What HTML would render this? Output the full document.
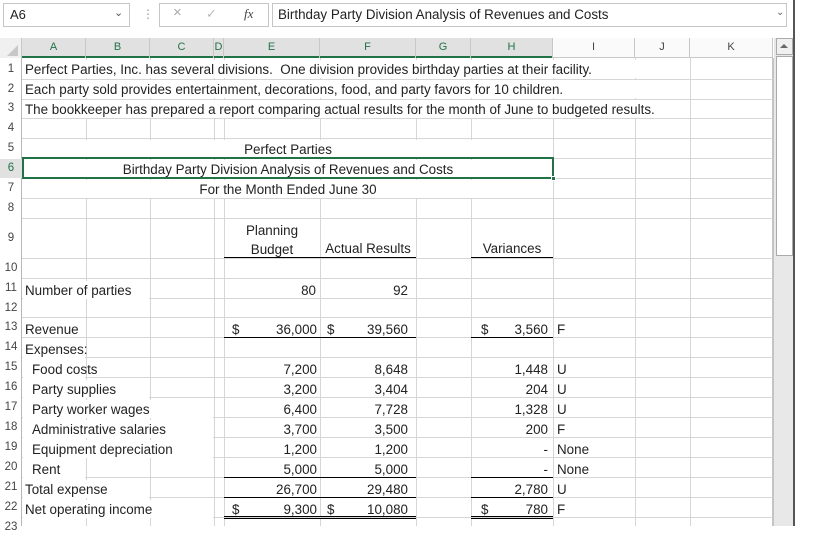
<!DOCTYPE html>
<html><head><meta charset="utf-8"><style>
*{margin:0;padding:0;box-sizing:border-box}
body{width:836px;height:526px;background:#fff;position:relative;overflow:hidden;font-family:"Liberation Sans",sans-serif;font-size:13.4px;color:#222}
.a{position:absolute;line-height:20px}
.vl{position:absolute;width:1px;background:#d6d6d6}
.hl{position:absolute;height:1px;background:#d6d6d6}
.t{position:absolute;white-space:nowrap;line-height:20px;height:18px;background:#fff;overflow:visible}
.r{text-align:right}
.c{text-align:center}
.rn{position:absolute;left:0;width:22px;text-align:center;font-size:11.5px;color:#444;line-height:18px}
.ch{position:absolute;top:38px;height:20px;line-height:19px;text-align:center;font-size:11px;border-right:1px solid #c8c8c8}
.ul{position:absolute;height:1px;background:#000}
</style></head><body>
<!-- formula bar -->
<div class="a" style="left:3px;top:3px;width:127px;height:24px;border:1px solid #c6c6c6"></div>
<div class="a" style="left:10px;top:5px;font-size:13px">A6</div>
<div class="a" style="left:114px;top:3px;font-size:11px;color:#555">&#8964;</div>
<div class="a" style="left:142px;top:4px;font-size:12px;color:#999">&#8942;</div>
<div class="a" style="left:159px;top:3px;width:110px;height:24px;border:1px solid #c6c6c6"></div>
<div class="a" style="left:173px;top:3px;font-size:15px;color:#aaa">&#215;</div>
<div class="a" style="left:206px;top:4px;font-size:13px;color:#bbb">&#10003;</div>
<div class="a" style="left:244px;top:4px;font-size:13px;font-style:italic;font-family:'Liberation Serif',serif;color:#444">fx</div>
<div class="a" style="left:272px;top:3px;width:515px;height:24px;border:1px solid #c6c6c6"></div>
<div class="a" style="left:278px;top:5px;font-size:13.4px">Birthday Party Division Analysis of Revenues and Costs</div>
<div class="a" style="left:776px;top:3px;font-size:10px;color:#666">&#8964;</div>
<!-- column headers -->
<div class="a" style="left:0;top:38px;width:22px;height:20px;background:#f0f0f0;border-right:1px solid #c8c8c8"></div>
<div class="a" style="left:7px;top:45px;width:0;height:0;border-left:11px solid transparent;border-bottom:11px solid #c8c8c8"></div>
<div class="a" style="left:22px;top:38px;width:531px;height:20px;background:#e1e1e1;border-bottom:2px solid #217346"></div>
<div class="a" style="left:553px;top:38px;width:220px;height:20px;background:#fafafa;border-bottom:1px solid #c8c8c8"></div>
<div class="ch" style="left:22px;width:64px;color:#217346">A</div>
<div class="ch" style="left:86px;width:64px;color:#217346">B</div>
<div class="ch" style="left:150px;width:64px;color:#217346">C</div>
<div class="ch" style="left:214px;width:10px;color:#217346">D</div>
<div class="ch" style="left:224px;width:96px;color:#217346">E</div>
<div class="ch" style="left:320px;width:96px;color:#217346">F</div>
<div class="ch" style="left:416px;width:55px;color:#217346">G</div>
<div class="ch" style="left:471px;width:82px;color:#217346">H</div>
<div class="ch" style="left:553px;width:82px;color:#444">I</div>
<div class="ch" style="left:635px;width:55px;color:#444">J</div>
<div class="ch" style="left:690px;width:83px;color:#444">K</div>
<!-- row header column -->
<div class="a" style="left:0;top:58px;width:22px;height:468px;background:#fff;border-right:1px solid #b8b8b8"></div>
<div class="a" style="left:0;top:159px;width:22px;height:19px;background:#e1e1e1"></div>
<!-- grid vertical -->
<div class="vl" style="left:86px;top:58px;height:468px"></div>
<div class="vl" style="left:150px;top:58px;height:468px"></div>
<div class="vl" style="left:214px;top:58px;height:468px"></div>
<div class="vl" style="left:224px;top:58px;height:468px"></div>
<div class="vl" style="left:320px;top:58px;height:468px"></div>
<div class="vl" style="left:416px;top:58px;height:468px"></div>
<div class="vl" style="left:471px;top:58px;height:468px"></div>
<div class="vl" style="left:553px;top:58px;height:468px"></div>
<div class="vl" style="left:635px;top:58px;height:468px"></div>
<div class="vl" style="left:690px;top:58px;height:468px"></div>
<div class="a" style="left:772px;top:58px;width:2px;height:468px;background:#c4c4c4"></div>
<!-- grid horizontal -->
<div class="hl" style="left:22px;top:79px;width:751px"></div>
<div class="hl" style="left:22px;top:99px;width:751px"></div>
<div class="hl" style="left:22px;top:118px;width:751px"></div>
<div class="hl" style="left:22px;top:138px;width:751px"></div>
<div class="hl" style="left:22px;top:158px;width:751px"></div>
<div class="hl" style="left:22px;top:178px;width:751px"></div>
<div class="hl" style="left:22px;top:198px;width:751px"></div>
<div class="hl" style="left:22px;top:218px;width:751px"></div>
<div class="hl" style="left:22px;top:258px;width:751px"></div>
<div class="hl" style="left:22px;top:278px;width:751px"></div>
<div class="hl" style="left:22px;top:298px;width:751px"></div>
<div class="hl" style="left:22px;top:317px;width:751px"></div>
<div class="hl" style="left:22px;top:337px;width:751px"></div>
<div class="hl" style="left:22px;top:357px;width:751px"></div>
<div class="hl" style="left:22px;top:377px;width:751px"></div>
<div class="hl" style="left:22px;top:397px;width:751px"></div>
<div class="hl" style="left:22px;top:417px;width:751px"></div>
<div class="hl" style="left:22px;top:437px;width:751px"></div>
<div class="hl" style="left:22px;top:457px;width:751px"></div>
<div class="hl" style="left:22px;top:477px;width:751px"></div>
<div class="hl" style="left:22px;top:497px;width:751px"></div>
<div class="hl" style="left:22px;top:517px;width:751px"></div>
<!-- row numbers -->
<div class="rn" style="top:60px">1</div><div class="rn" style="top:80px">2</div><div class="rn" style="top:99px">3</div><div class="rn" style="top:119px">4</div>
<div class="rn" style="top:139px">5</div><div class="rn" style="top:159px;color:#217346">6</div><div class="rn" style="top:179px">7</div><div class="rn" style="top:199px">8</div>
<div class="rn" style="top:229px">9</div><div class="rn" style="top:259px">10</div><div class="rn" style="top:279px">11</div><div class="rn" style="top:299px">12</div>
<div class="rn" style="top:318px">13</div><div class="rn" style="top:338px">14</div><div class="rn" style="top:358px">15</div><div class="rn" style="top:378px">16</div>
<div class="rn" style="top:398px">17</div><div class="rn" style="top:418px">18</div><div class="rn" style="top:438px">19</div><div class="rn" style="top:458px">20</div>
<div class="rn" style="top:478px">21</div><div class="rn" style="top:498px">22</div><div class="rn" style="top:518px">23</div>
<!-- text rows 1-3 -->
<div class="t" style="left:23px;top:60px;width:666px;padding-left:2px">Perfect Parties, Inc. has several divisions.&nbsp; One division provides birthday parties at their facility.</div>
<div class="t" style="left:23px;top:80px;width:666px;padding-left:2px">Each party sold provides entertainment, decorations, food, and party favors for 10 children.</div>
<div class="t" style="left:23px;top:100px;width:666px;padding-left:2px">The bookkeeper has prepared a report comparing actual results for the month of June to budgeted results.</div>
<!-- titles -->
<div class="t c" style="left:23px;top:140px;width:530px">Perfect Parties</div>
<div class="t c" style="left:23px;top:160px;width:530px">Birthday Party Division Analysis of Revenues and Costs</div>
<div class="t c" style="left:23px;top:180px;width:530px">For the Month Ended June 30</div>
<div class="a" style="left:22px;top:157px;width:532px;height:22px;border:2px solid #217346"></div>
<div class="a" style="left:551px;top:176px;width:5px;height:5px;background:#217346;border:1px solid #fff"></div>
<!-- row 9 -->
<div class="a c" style="left:225px;top:221px;width:94px;line-height:19px">Planning<br>Budget</div>
<div class="a c" style="left:321px;top:239px;width:94px">Actual Results</div>
<div class="a c" style="left:472px;top:239px;width:80px">Variances</div>
<div class="ul" style="left:224px;top:257px;width:192px"></div>
<div class="ul" style="left:471px;top:257px;width:82px"></div>
<!-- row 11 -->
<div class="t" style="left:23px;top:281px;width:126px;padding-left:2px">Number of parties</div>
<div class="a r" style="left:224px;top:281px;width:92px">80</div>
<div class="a r" style="left:320px;top:281px;width:88px">92</div>
<!-- row 13 -->
<div class="a" style="left:25px;top:320px">Revenue</div>
<div class="a" style="left:232px;top:320px">$</div><div class="a r" style="left:224px;top:320px;width:93px">36,000</div>
<div class="a" style="left:327px;top:320px">$</div><div class="a r" style="left:320px;top:320px;width:88px">39,560</div>
<div class="a" style="left:481px;top:320px">$</div><div class="a r" style="left:471px;top:320px;width:77px">3,560</div>
<div class="a" style="left:557px;top:320px">F</div>
<div class="ul" style="left:224px;top:337px;width:192px"></div>
<div class="ul" style="left:471px;top:337px;width:82px"></div>
<!-- expenses -->
<div class="t" style="left:23px;top:340px;width:62px;padding-left:2px">Expenses:</div>
<div class="t" style="left:23px;top:360px;width:62px;padding-left:9px">Food costs</div>
<div class="t" style="left:23px;top:380px;width:126px;padding-left:9px">Party supplies</div>
<div class="t" style="left:23px;top:400px;width:190px;padding-left:9px">Party worker wages</div>
<div class="t" style="left:23px;top:420px;width:190px;padding-left:9px">Administrative salaries</div>
<div class="t" style="left:23px;top:440px;width:190px;padding-left:9px">Equipment depreciation</div>
<div class="t" style="left:23px;top:460px;width:62px;padding-left:9px">Rent</div>
<div class="t" style="left:23px;top:480px;width:126px;padding-left:2px">Total expense</div>
<div class="t" style="left:23px;top:500px;width:190px;padding-left:2px">Net operating income</div>

<div class="a r" style="left:224px;top:360px;width:93px">7,200</div><div class="a r" style="left:320px;top:360px;width:88px">8,648</div><div class="a r" style="left:471px;top:360px;width:77px">1,448</div><div class="a" style="left:557px;top:360px">U</div>
<div class="a r" style="left:224px;top:380px;width:93px">3,200</div><div class="a r" style="left:320px;top:380px;width:88px">3,404</div><div class="a r" style="left:471px;top:380px;width:77px">204</div><div class="a" style="left:557px;top:380px">U</div>
<div class="a r" style="left:224px;top:400px;width:93px">6,400</div><div class="a r" style="left:320px;top:400px;width:88px">7,728</div><div class="a r" style="left:471px;top:400px;width:77px">1,328</div><div class="a" style="left:557px;top:400px">U</div>
<div class="a r" style="left:224px;top:420px;width:93px">3,700</div><div class="a r" style="left:320px;top:420px;width:88px">3,500</div><div class="a r" style="left:471px;top:420px;width:77px">200</div><div class="a" style="left:557px;top:420px">F</div>
<div class="a r" style="left:224px;top:440px;width:93px">1,200</div><div class="a r" style="left:320px;top:440px;width:88px">1,200</div><div class="a r" style="left:471px;top:440px;width:77px">-</div><div class="a" style="left:557px;top:440px">None</div>
<div class="a r" style="left:224px;top:460px;width:93px">5,000</div><div class="a r" style="left:320px;top:460px;width:88px">5,000</div><div class="a r" style="left:471px;top:460px;width:77px">-</div><div class="a" style="left:557px;top:460px">None</div>
<div class="ul" style="left:224px;top:477px;width:192px"></div>
<div class="ul" style="left:471px;top:477px;width:82px"></div>
<div class="a r" style="left:224px;top:480px;width:93px">26,700</div><div class="a r" style="left:320px;top:480px;width:88px">29,480</div><div class="a r" style="left:471px;top:480px;width:77px">2,780</div><div class="a" style="left:557px;top:480px">U</div>
<div class="ul" style="left:224px;top:497px;width:192px"></div>
<div class="ul" style="left:471px;top:497px;width:82px"></div>
<div class="a" style="left:232px;top:500px">$</div><div class="a r" style="left:224px;top:500px;width:93px">9,300</div>
<div class="a" style="left:327px;top:500px">$</div><div class="a r" style="left:320px;top:500px;width:88px">10,080</div>
<div class="a" style="left:481px;top:500px">$</div><div class="a r" style="left:471px;top:500px;width:77px">780</div>
<div class="a" style="left:557px;top:500px">F</div>
<div class="ul" style="left:224px;top:516px;width:192px"></div><div class="ul" style="left:224px;top:518px;width:192px"></div>
<div class="ul" style="left:471px;top:516px;width:82px"></div><div class="ul" style="left:471px;top:518px;width:82px"></div>
<!-- scrollbar -->
<div class="a" style="left:774px;top:38px;width:19px;height:488px;background:#e8e8e8"></div>
<div class="a" style="left:776px;top:38px;width:17px;height:17px;background:#f0f0f0;border:1px solid #aaa"></div>
<div class="a" style="left:780px;top:44px;width:0;height:0;border-left:4px solid transparent;border-right:4px solid transparent;border-bottom:4px solid #666"></div>
<div class="a" style="left:776px;top:56px;width:17px;height:200px;background:#fff;border:1px solid #aaa"></div>
<div class="a" style="left:793px;top:0;width:2px;height:526px;background:#555"></div>
</body></html>
